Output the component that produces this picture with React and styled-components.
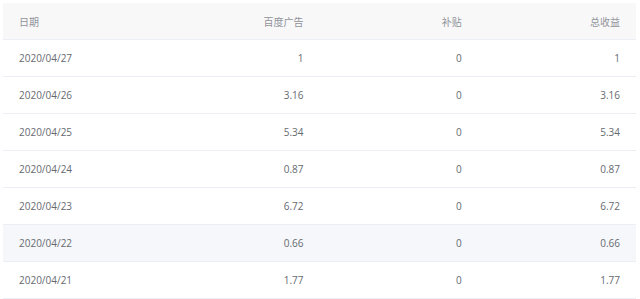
import React from 'react';
import styled, { createGlobalStyle } from 'styled-components';

const GlobalStyle = createGlobalStyle`
    body {
        margin: 0;
        background: #fff;
        font-family: "Open Sans", "Noto Sans CJK SC", sans-serif;
    }
`;

const Wrapper = styled.div`
    padding: 3px 4px 0 3px;
`;

const Table = styled.div`
    display: grid;
    grid-template-columns: repeat(4, 1fr);
    font-size: 10px;
`;

const Row = styled.div`
    display: contents;
`;

const Cell = styled.div`
    height: 36px;
    display: flex;
    align-items: center;
    justify-content: ${({ $align }) => ($align === 'right' ? 'flex-end' : 'flex-start')};
    padding: 0 16px;
    border-bottom: 1px solid #ebeef5;
    color: ${({ $head }) => ($head ? '#909399' : '#666a70')};
    background: ${({ $head, $hover }) => ($head ? '#f8f8f9' : $hover ? '#f5f7fa' : '#fff')};
`;

const rows = [
    ['2020/04/27', '1', '0', '1'],
    ['2020/04/26', '3.16', '0', '3.16'],
    ['2020/04/25', '5.34', '0', '5.34'],
    ['2020/04/24', '0.87', '0', '0.87'],
    ['2020/04/23', '6.72', '0', '6.72'],
    ['2020/04/22', '0.66', '0', '0.66'],
    ['2020/04/21', '1.77', '0', '1.77'],
];

const headers = ['日期', '百度广告', '补贴', '总收益'];

const App = () => {
    return (
        <>
            <GlobalStyle />
            <Wrapper>
                <Table>
                    <Row>
                        {headers.map((h, i) => (
                            <Cell key={h} $head $align={i === 0 ? 'left' : 'right'}>
                                {h}
                            </Cell>
                        ))}
                    </Row>
                    {rows.map((r) => (
                        <Row key={r[0]}>
                            {r.map((v, i) => (
                                <Cell
                                    key={i}
                                    $hover={r[0] === '2020/04/22'}
                                    $align={i === 0 ? 'left' : 'right'}
                                >
                                    {v}
                                </Cell>
                            ))}
                        </Row>
                    ))}
                </Table>
            </Wrapper>
        </>
    );
};

export default App;
